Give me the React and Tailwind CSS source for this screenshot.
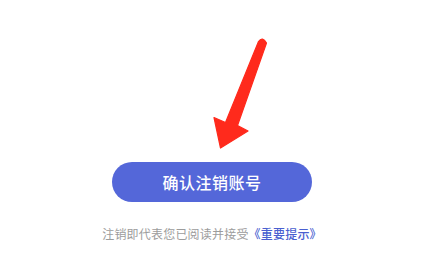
export default function App() {
  return (
    <div className="w-[436px] h-[255px] bg-white overflow-hidden flex flex-col" style={{ fontFamily: '"Noto Sans CJK SC", "Noto Sans", sans-serif' }}>
      <svg className="block shrink-0" width="436" height="162" viewBox="0 0 436 162">
        <path
          d="M258.5 41.5 Q262.5 36 266.5 43 L237.5 125.5 L248 131 L220.5 148 L214 117.5 L225.5 122.5 Z"
          fill="#ff2a1c"
          stroke="#ff2a1c"
          strokeWidth="1.2"
          strokeLinejoin="round"
        />
      </svg>
      <div className="flex flex-col items-center pr-3">
        <button className="w-[200px] h-10 rounded-full bg-[#5467d9] text-white text-[16px] font-medium leading-none tracking-[0.5px]">
          确认注销账号
        </button>
        <p className="mt-[23px] text-[12px] leading-[17px] tracking-[0.2px] text-[#9c9c9c]">
          注销即代表您已阅读并接受<span className="text-[#4a5fd0] font-medium">《重要提示》</span>
        </p>
      </div>
    </div>
  );
}
